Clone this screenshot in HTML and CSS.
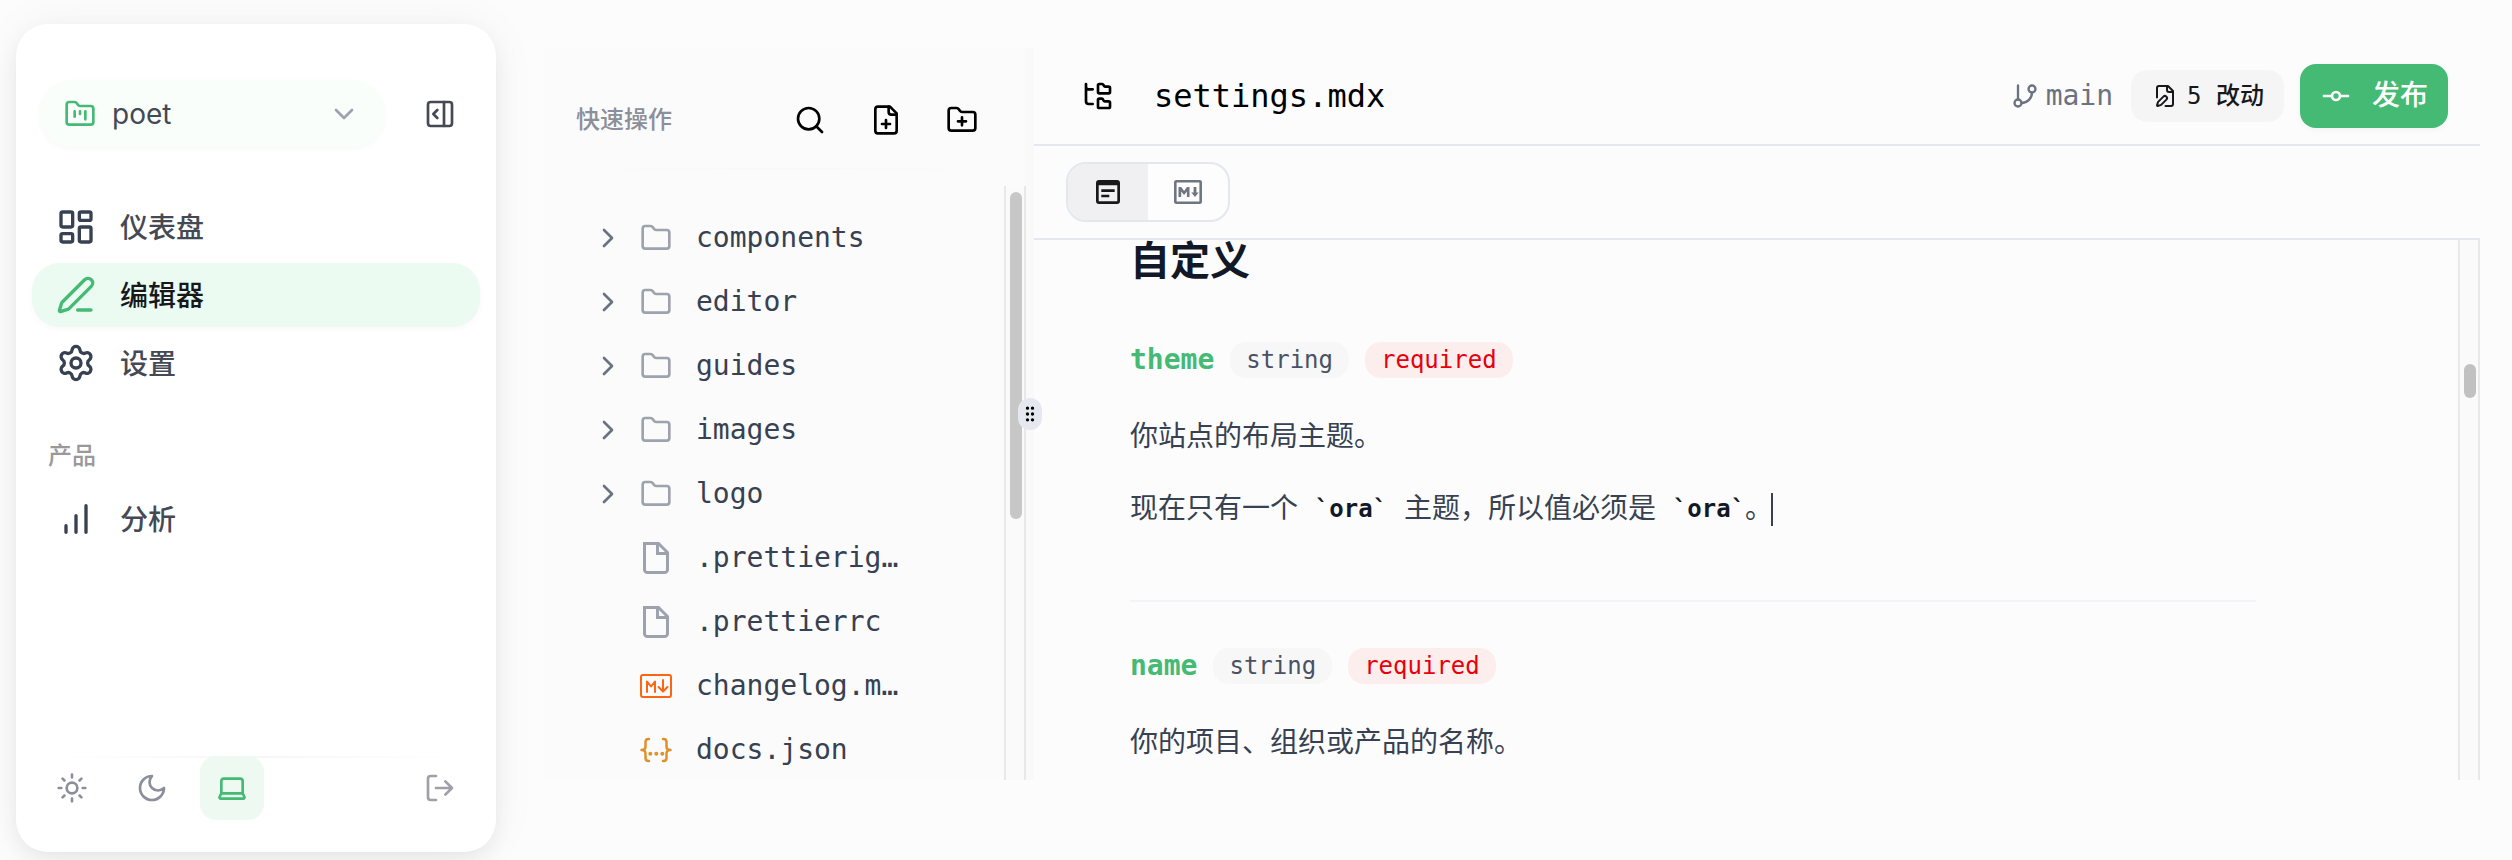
FILE: index.html
```html
<!DOCTYPE html>
<html lang="zh-CN">
<head>
<meta charset="utf-8">
<title>settings.mdx</title>
<link rel="stylesheet" href="styles.css">
</head>
<body>
<svg class="defs" aria-hidden="true">
  <symbol id="folder" viewBox="0 0 24 24"><path d="M20 20a2 2 0 0 0 2-2V8a2 2 0 0 0-2-2h-7.900a2 2 0 0 1-1.690-.900L9.600 3.900A2 2 0 0 0 7.930 3H4a2 2 0 0 0-2 2v13a2 2 0 0 0 2 2Z"/></symbol>
  <symbol id="chevron" viewBox="0 0 24 24"><path d="m9 18 6-6-6-6"/></symbol>
  <symbol id="file" viewBox="0 0 32 32"><path d="M4.500 1.500H18.500L27.500 10.500V27.500A3 3 0 0 1 24.500 30.500H7.500A3 3 0 0 1 4.500 27.500ZM17.500 2V11.500H27"/></symbol>
</svg>
<div class="app">
  <aside class="sidebar">
    <div class="side-top">
      <button class="project">
        <svg class="i32 green" viewBox="0 0 24 24"><path d="M4 20h16a2 2 0 0 0 2-2V8a2 2 0 0 0-2-2h-7.930a2 2 0 0 1-1.660-.900l-.820-1.200A2 2 0 0 0 7.930 3H4a2 2 0 0 0-2 2v13c0 1.100.900 2 2 2Z"/><path d="M8 10v4M12 10v2M16 10v6"/></svg>
        <span class="project-name">poet</span>
        <svg class="i32 caret-down" viewBox="0 0 24 24"><path d="m6 9 6 6 6-6"/></svg>
      </button>
      <svg class="i32 collapse" viewBox="0 0 24 24"><rect width="18" height="18" x="3" y="3" rx="2"/><path d="M15 3v18M10 15l-3-3 3-3"/></svg>
    </div>
    <nav class="nav">
      <a class="nav-item"><svg class="i40" viewBox="0 0 24 24"><rect width="7" height="9" x="3" y="3" rx="1"/><rect width="7" height="5" x="14" y="3" rx="1"/><rect width="7" height="9" x="14" y="12" rx="1"/><rect width="7" height="5" x="3" y="16" rx="1"/></svg><span>仪表盘</span></a>
      <a class="nav-item active"><svg class="i40" viewBox="0 0 24 24"><path d="M13 21h8"/><path d="M21.174 6.812a1 1 0 0 0-3.986-3.987L3.842 16.174a2 2 0 0 0-.5.830l-1.321 4.352a.5.5 0 0 0 .623.622l4.353-1.320a2 2 0 0 0 .830-.497z"/></svg><span>编辑器</span></a>
      <a class="nav-item"><svg class="i40" viewBox="0 0 24 24"><path d="M9.671 4.136a2.340 2.340 0 0 1 4.659 0 2.340 2.340 0 0 0 3.319 1.915 2.340 2.340 0 0 1 2.330 4.033 2.340 2.340 0 0 0 0 3.831 2.340 2.340 0 0 1-2.330 4.033 2.340 2.340 0 0 0-3.319 1.915 2.340 2.340 0 0 1-4.659 0 2.340 2.340 0 0 0-3.320-1.915 2.340 2.340 0 0 1-2.330-4.033 2.340 2.340 0 0 0 0-3.831A2.340 2.340 0 0 1 6.350 6.051a2.340 2.340 0 0 0 3.319-1.915"/><circle cx="12" cy="12" r="3"/></svg><span>设置</span></a>
    </nav>
    <h2 class="group-label">产品</h2>
    <nav class="nav">
      <a class="nav-item"><svg class="i40" viewBox="0 0 24 24"><path d="M6 20v-4M12 20V10M18 20V4"/></svg><span>分析</span></a>
    </nav>
    <footer class="side-foot">
      <button class="foot-btn"><svg class="i32" viewBox="0 0 24 24"><circle cx="12" cy="12" r="4"/><path d="M12 2v2M12 20v2M4.930 4.930l1.410 1.410M17.660 17.660l1.410 1.410M2 12h2M20 12h2M6.340 17.660l-1.410 1.410M19.070 4.930l-1.410 1.410"/></svg></button>
      <button class="foot-btn"><svg class="i32" viewBox="0 0 24 24"><path d="M12 3a6 6 0 0 0 9 9 9 9 0 1 1-9-9Z"/></svg></button>
      <button class="foot-btn on"><svg class="i32" viewBox="0 0 24 24"><path d="M20 16V7a2 2 0 0 0-2-2H6a2 2 0 0 0-2 2v9m16 0H4m16 0 1.280 2.550a1 1 0 0 1-.900 1.450H3.620a1 1 0 0 1-.900-1.450L4 16"/></svg></button>
      <button class="foot-btn logout"><svg class="i32" viewBox="0 0 24 24"><path d="M9 21H5a2 2 0 0 1-2-2V5a2 2 0 0 1 2-2h4M16 17l5-5-5-5M21 12H9"/></svg></button>
    </footer>
  </aside>

  <main class="workspace">
    <section class="files">
      <header class="files-head">
        <span class="files-title">快速操作</span>
        <svg class="i32" viewBox="0 0 24 24"><circle cx="11" cy="11" r="8"/><path d="m21 21-4.300-4.300"/></svg>
        <svg class="i32" viewBox="0 0 24 24"><path d="M15 2H6a2 2 0 0 0-2 2v16a2 2 0 0 0 2 2h12a2 2 0 0 0 2-2V7Z"/><path d="M14 2v4a2 2 0 0 0 2 2h4M9 15h6M12 18v-6"/></svg>
        <svg class="i32" viewBox="0 0 24 24"><path d="M12 10v6M9 13h6"/><path d="M20 20a2 2 0 0 0 2-2V8a2 2 0 0 0-2-2h-7.900a2 2 0 0 1-1.690-.900L9.600 3.900A2 2 0 0 0 7.930 3H4a2 2 0 0 0-2 2v13a2 2 0 0 0 2 2Z"/></svg>
      </header>
      <div class="files-body">
        <ul class="tree">
          <li><svg class="i32 arrow"><use href="#chevron"/></svg><svg class="i32"><use href="#folder"/></svg><span>components</span></li>
          <li><svg class="i32 arrow"><use href="#chevron"/></svg><svg class="i32"><use href="#folder"/></svg><span>editor</span></li>
          <li><svg class="i32 arrow"><use href="#chevron"/></svg><svg class="i32"><use href="#folder"/></svg><span>guides</span></li>
          <li><svg class="i32 arrow"><use href="#chevron"/></svg><svg class="i32"><use href="#folder"/></svg><span>images</span></li>
          <li><svg class="i32 arrow"><use href="#chevron"/></svg><svg class="i32"><use href="#folder"/></svg><span>logo</span></li>
          <li class="leaf"><svg class="i32 file"><use href="#file"/></svg><span>.prettierig…</span></li>
          <li class="leaf"><svg class="i32 file"><use href="#file"/></svg><span>.prettierrc</span></li>
          <li class="leaf"><svg class="i32 md" viewBox="0 0 32 32"><rect x="1" y="5" width="30" height="22" rx="2"/><path d="M7 22V11.500l4 5 4-5V22M23 10v11M18.500 17l4.500 4.500 4.500-4.500"/></svg><span>changelog.m…</span></li>
          <li class="leaf"><svg class="i32 json" viewBox="0 0 32 32"><path d="M9 5H8.500Q5.500 5 5.500 8v4.500Q5.500 16 1.500 16q4 0 4 3.500V24q0 3 3 3H9M23 5h.5q3 0 3 3v4.500q0 3.500 4 3.500-4 0-4 3.500V24q0 3-3 3H23"/><g class="dots"><circle cx="10.300" cy="19.700" r="2"/><circle cx="16.300" cy="19.700" r="2"/><circle cx="22.300" cy="19.700" r="2"/></g></svg><span>docs.json</span></li>
        </ul>
        <div class="scroll"><div class="thumb thumb-files"></div></div>
      </div>
    </section>
    <div class="splitter"><div class="grip"><svg viewBox="0 0 24 24"><circle cx="9" cy="5" r="1"/><circle cx="9" cy="12" r="1"/><circle cx="9" cy="19" r="1"/><circle cx="15" cy="5" r="1"/><circle cx="15" cy="12" r="1"/><circle cx="15" cy="19" r="1"/></svg></div></div>
    <section class="editor">
      <header class="editor-head">
        <svg class="i32" viewBox="0 0 24 24"><path d="M20 10a1 1 0 0 0 1-1V6a1 1 0 0 0-1-1h-2.500a1 1 0 0 1-.800-.400l-.900-1.200A1 1 0 0 0 15 3h-2a1 1 0 0 0-1 1v5a1 1 0 0 0 1 1ZM20 21a1 1 0 0 0 1-1v-3a1 1 0 0 0-1-1h-2.900a1 1 0 0 1-.880-.550l-.420-.850a1 1 0 0 0-.920-.600H13a1 1 0 0 0-1 1v5a1 1 0 0 0 1 1ZM3 5a2 2 0 0 0 2 2h3M3 3v13a2 2 0 0 0 2 2h3"/></svg>
        <h1 class="filename">settings.mdx</h1>
        <span class="branch"><svg viewBox="0 0 24 24"><path d="M6 3v12"/><circle cx="18" cy="6" r="3"/><circle cx="6" cy="18" r="3"/><path d="M18 9a9 9 0 0 1-9 9"/></svg>main</span>
        <span class="changes"><svg viewBox="0 0 24 24"><path d="M12.500 22H18a2 2 0 0 0 2-2V7l-5-5H6a2 2 0 0 0-2 2v9.500"/><path d="M14 2v4a2 2 0 0 0 2 2h4"/><path d="M13.378 15.626a1 1 0 1 0-3.004-3.004l-5.010 5.012a2 2 0 0 0-.506.854l-.837 2.870a.5.5 0 0 0 .620.620l2.870-.837a2 2 0 0 0 .854-.506z"/></svg>5 改动</span>
        <button class="publish"><svg class="i32" viewBox="0 0 24 24"><circle cx="12" cy="12" r="3"/><path d="M3 12h6M15 12h6"/></svg><span>发布</span></button>
      </header>
      <div class="toolbar">
        <div class="toggle">
          <button class="seg on"><svg viewBox="0 0 24 24"><path class="solid" fill-rule="evenodd" d="M3 0H21a3 3 0 0 1 3 3V21a3 3 0 0 1-3 3H3a3 3 0 0 1-3-3V3a3 3 0 0 1 3-3ZM2.700 5.300V21.300H21.300V5.300ZM5.300 9.300H18.700V12H5.300ZM5.300 14.700H13.300V17.300H5.300Z"/></svg></button>
          <button class="seg"><svg class="mdx" viewBox="0 0 28 24"><rect x="1.300" y="1.300" width="25.400" height="21.400" rx="1"/><path class="solid" d="M4.500 17V7h2.700l2.900 4 2.900-4h2.500v10h-2.600v-5.600l-2.800 3.600-2.900-3.600V17ZM19.600 7h2.800v5.500h2.300L21 17l-3.700-4.500h2.300Z"/></svg></button>
        </div>
      </div>
      <div class="editor-body">
        <article class="doc">
          <h2>自定义</h2>
          <div class="param"><code class="key">theme</code><span class="tag">string</span><span class="tag req">required</span></div>
          <p class="lead">你站点的布局主题。</p>
          <p class="more">现在只有一个 <code>`ora`</code> 主题，所以值必须是 <code>`ora`</code>。<i class="cursor"></i></p>
          <hr>
          <div class="param"><code class="key">name</code><span class="tag">string</span><span class="tag req">required</span></div>
          <p class="lead">你的项目、组织或产品的名称。</p>
        </article>
        <div class="scroll"><div class="thumb thumb-doc"></div></div>
      </div>
    </section>
  </main>
</div>
</body>
</html>
```

FILE: styles.css
```css
* { box-sizing: border-box; }
body, h1, h2, p, ul { margin: 0; padding: 0; }
body {
  background: #fcfcfc;
  font-family: Inter, "Noto Sans CJK SC", sans-serif;
  overflow: hidden;
}
button { border: 0; background: none; padding: 0; font: inherit; color: inherit; }
svg {
  display: block;
  flex: none;
  fill: none;
  stroke: currentColor;
  stroke-width: 2;
  stroke-linecap: round;
  stroke-linejoin: round;
}
.defs { position: absolute; width: 0; height: 0; }
.i32 { width: 32px; height: 32px; }
.i40 { width: 40px; height: 40px; }
.green { color: #44ba74; }
.solid { fill: currentColor; stroke: none; }

.app { display: flex; width: 2512px; height: 860px; padding-left: 16px; }

/* Sidebar */
.sidebar {
  display: flex;
  flex-direction: column;
  width: 480px;
  height: 828px;
  margin-top: 24px;
  padding: 56px 16px 32px;
  border-radius: 32px;
  background: #fff;
  box-shadow: 0 0 50px rgba(0, 0, 0, .045), 0 8px 24px -4px rgba(0, 0, 0, .09);
}
.side-top { display: flex; align-items: center; padding: 0 24px 0 8px; }
.project {
  display: flex;
  align-items: center;
  width: 344px;
  height: 67px;
  padding: 0 24px;
  border-radius: 32px;
  background: #f9fefb;
  box-shadow: 0 2px 6px rgba(0, 0, 0, .03);
  color: #454954;
}
.project-name { flex: 1; margin-left: 16px; text-align: left; font-size: 28px; line-height: 40px; }
.caret-down { color: #9ca3af; }
.collapse { margin-left: 40px; color: #454954; }
.nav { display: flex; flex-direction: column; gap: 4px; }
.side-top + .nav { margin-top: 48px; }
.nav-item {
  display: flex;
  align-items: center;
  gap: 24px;
  height: 64px;
  padding-left: 24px;
  border-radius: 28px;
  color: #454954;
  font-size: 28px;
  font-weight: 500;
  line-height: 40px;
}
.nav-item span { padding-top: 2px; }
.nav-item svg { color: #374151; }
.active { background: #ebfbf1; color: #18181b; box-shadow: 0 2px 6px rgba(0, 0, 0, .03); }
.active svg { color: #44ba74; }
.group-label { margin: 45px 16px 15px; color: #999; font-size: 24px; font-weight: 500; line-height: 32px; }
.side-foot {
  display: flex;
  gap: 16px;
  margin-top: auto;
  padding-left: 8px;
  background: linear-gradient(90deg, transparent 5%, #f6f6f7 50%, transparent 95%) top / 100% 2px no-repeat;
  color: #8b8f9a;
}
.foot-btn { display: flex; align-items: center; justify-content: center; width: 64px; height: 64px; border-radius: 16px; }
.foot-btn.on { background: #eef9f2; color: #44ba74; }
.logout { margin-left: auto; margin-right: 8px; color: #9f9fa9; }

/* Workspace */
.workspace { display: flex; width: 1936px; height: 732px; margin: 48px 0 0 48px; }
.files { display: flex; flex-direction: column; width: 482px; background: #fbfbfb; }
.files-head {
  display: flex;
  align-items: center;
  gap: 44px;
  height: 138px;
  padding: 6px 48px 0 32px;
  background: linear-gradient(90deg, transparent 5%, #f8f8f8 50%, transparent 95%) 0 120px / 100% 2px no-repeat;
  color: #000;
}
.files-title { margin-right: auto; color: #8b8f9a; font-size: 24px; font-weight: 500; line-height: 32px; }
.files-body { display: flex; flex: 1; min-height: 0; }
.tree {
  flex: 1;
  padding-top: 20px;
  overflow: hidden;
  list-style: none;
  color: #374151;
  font: 28px/40px "DejaVu Sans Mono", "Noto Sans CJK SC", monospace;
}
.tree li { display: flex; align-items: center; height: 64px; padding-left: 48px; }
.tree .leaf { padding-left: 96px; }
.tree svg { color: #9ca3af; }
.tree .arrow { margin-right: 16px; color: #6b7280; }
.tree span { margin-left: 24px; white-space: nowrap; }
.tree .file { stroke-width: 3; stroke-linecap: butt; stroke-linejoin: miter; }
.tree .md { color: #fb6514; }
.tree .json { color: #e0912a; stroke-width: 2.5; }
.dots { fill: currentColor; stroke: none; }
.scroll { width: 22px; border: solid #e8e8e8; border-width: 0 2px; background: #fafafa; }
.thumb { width: 12px; margin-left: 4px; border-radius: 6px; background: #c1c1c1; }
.thumb-files { height: 327px; margin-top: 6px; background: #c7c7c7; }
.thumb-doc { height: 34px; margin-top: 124px; }

.splitter { position: relative; width: 8px; background: #f9f9f9; }
.grip {
  position: absolute;
  left: -8px;
  top: 350px;
  z-index: 1;
  display: flex;
  align-items: center;
  justify-content: center;
  width: 24px;
  height: 32px;
  border-radius: 12px;
  background: #e6e8ef;
}
.grip svg { width: 20px; height: 20px; color: #000; }

/* Editor */
.editor { display: flex; flex-direction: column; width: 1446px; font-family: "DejaVu Sans Mono", "Noto Sans CJK SC", monospace; }
.editor-head { display: flex; align-items: center; height: 98px; padding: 0 32px 0 48px; border-bottom: 2px solid #e3e7ee; }
.filename { margin: 0 auto 0 40px; font-size: 32px; font-weight: 400; line-height: 48px; color: #000; }
.branch { display: flex; align-items: center; gap: 7px; color: #6b7280; font-size: 28px; line-height: 40px; }
.branch svg { width: 28px; height: 28px; }
.changes {
  display: flex;
  align-items: center;
  gap: 10px;
  height: 52px;
  margin: 0 16px 0 18px;
  padding: 0 20px 0 22px;
  border-radius: 16px;
  background: #f5f5f5;
  color: #18181b;
  font-size: 24px;
  font-weight: 500;
  line-height: 32px;
}
.changes svg { width: 24px; height: 24px; }
.publish {
  display: flex;
  align-items: center;
  gap: 20px;
  width: 148px;
  height: 64px;
  padding-left: 20px;
  border-radius: 16px;
  background: #44ba74;
  color: #fff;
  font-size: 28px;
  font-weight: 500;
  line-height: 40px;
  box-shadow: 0 2px 6px rgba(0, 0, 0, .04);
}
.toolbar { height: 94px; padding: 16px 32px; border-bottom: 2px solid #e3e7ee; }
.toggle { display: flex; width: 164px; height: 60px; border: 2px solid #e3e7ee; border-radius: 20px; overflow: hidden; background: #fdfdfd; }
.seg { display: flex; flex: 1; align-items: center; justify-content: center; color: #717582; }
.seg.on { background: #f0f0f2; color: #18181b; }
.seg svg { width: 24px; height: 24px; }
.seg .mdx { width: 28px; stroke-width: 2.6; }
.editor-body { display: flex; flex: 1; min-height: 0; }
.doc { flex: 1; padding: 0 202px 0 96px; overflow: hidden; color: #374151; font-size: 28px; }
.doc h2 { margin-bottom: 60px; color: #111827; font-size: 40px; font-weight: 600; line-height: 42px; }
.param { display: flex; align-items: center; gap: 16px; height: 36px; }
.key { color: #44ba74; font: bold 28px/36px "DejaVu Sans Mono", monospace; }
.tag { padding: 0 16px; border-radius: 16px; background: #f7f7f8; color: #4a5163; font-size: 24px; line-height: 36px; }
.tag.req { background: #fdeeee; color: #e7000b; }
.lead, .more { height: 56px; line-height: 56px; }
.lead { margin-top: 31px; }
.more { display: flex; align-items: center; margin-top: 16px; white-space: pre; }
.more code { color: #111827; font: bold 24px/56px "DejaVu Sans Mono", monospace; }
.cursor { width: 2px; height: 33px; margin-left: -2px; background: #374151; }
.doc hr { height: 2px; margin: 63px 0 46px; border: 0; background: #f3f4f8; }
```
